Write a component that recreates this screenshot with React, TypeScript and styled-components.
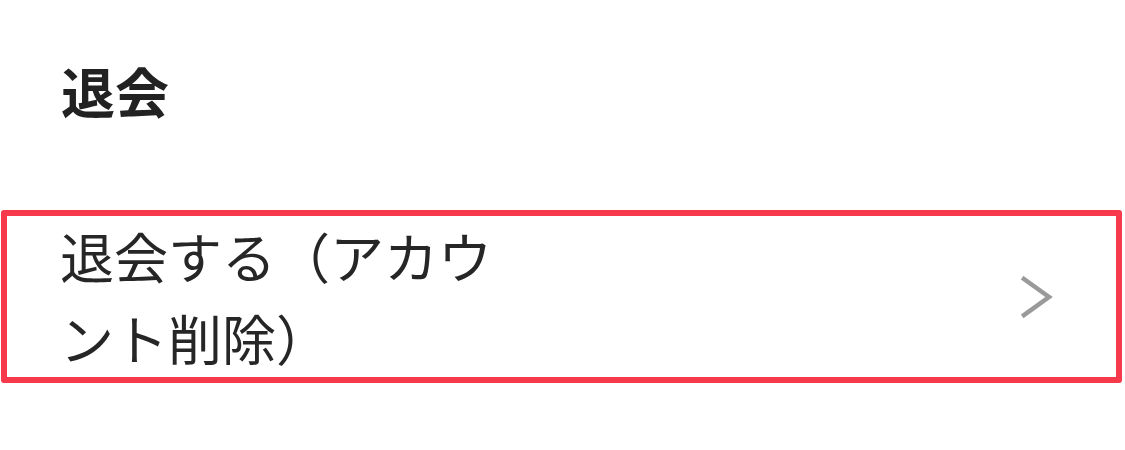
import styled, { createGlobalStyle } from "styled-components";

const GlobalStyle = createGlobalStyle`
  html, body {
    margin: 0;
    padding: 0;
    background: #ffffff;
  }

  body {
    font-family: "Noto Sans CJK JP", "Noto Sans", sans-serif;
    color: #222222;
  }
`;

const Page = styled.div`
  width: 1125px;
  height: 450px;
  box-sizing: border-box;
  padding: 64px 3px 0 1px;
`;

const SectionTitle = styled.h2`
  margin: 0 0 92px 60px;
  font-size: 54px;
  line-height: 54px;
  font-weight: 700;
  color: #222222;
`;

const MenuRow = styled.div`
  box-sizing: border-box;
  height: 173px;
  border: 6px solid #f63a4b;
  border-radius: 3px;
  display: flex;
  align-items: center;
  justify-content: space-between;
  padding: 0 62px 0 53px;
  cursor: pointer;
`;

const MenuLabel = styled.span`
  max-width: 480px;
  font-size: 54px;
  line-height: 82px;
  font-weight: 400;
  color: #262626;
`;

const Chevron = styled.svg`
  flex-shrink: 0;
  width: 36px;
  height: 44px;
`;

export default function App() {
  return (
    <>
      <GlobalStyle />
      <Page>
        <SectionTitle>退会</SectionTitle>
        <MenuRow>
          <MenuLabel>退会する（アカウント削除）</MenuLabel>
          <Chevron viewBox="0 0 36 44" fill="none">
            <polyline
              points="6,4 31,22 6,40"
              stroke="#9a9a9a"
              strokeWidth="4.5"
              strokeLinecap="square"
            />
          </Chevron>
        </MenuRow>
      </Page>
    </>
  );
}
